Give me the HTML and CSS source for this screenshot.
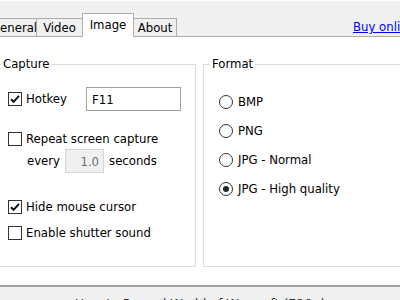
FILE: index.html
```html
<!DOCTYPE html>
<html lang="en">
<head>
    <meta charset="UTF-8">
    <title>Settings - Image</title>
    <link rel="stylesheet" href="styles.css">
</head>
<body>

    <div class="top-edge"></div>

    <!-- Tabs -->
    <div class="tab-strip">
        <div class="tab tab-general">General</div>
        <div class="tab tab-video">Video</div>
        <div class="tab tab-image active">Image</div>
        <div class="tab tab-about">About</div>
        <a class="buy-link" href="#">Buy online</a>
    </div>

    <!-- Image page -->
    <div class="panel">
        <fieldset class="group group-capture">
            <legend>Capture</legend>
            <div class="group-body">
                <div class="row row-hotkey">
                    <label class="check">
                        <span class="box checked">
                            <svg width="12" height="12" viewBox="0 0 12 12"><path d="M2 6.2 L4.6 8.8 L10 2.8" fill="none" stroke="#111" stroke-width="2"/></svg>
                        </span>
                        Hotkey
                    </label>
                    <input class="hotkey-input" type="text" value="F11">
                </div>
                <div class="row row-repeat">
                    <label class="check"><span class="box"></span>Repeat screen capture</label>
                </div>
                <div class="row row-every">
                    <span>every</span>
                    <input class="spin-input" type="text" value="1.0" disabled>
                    <span>seconds</span>
                </div>
                <div class="row row-cursor">
                    <label class="check">
                        <span class="box checked">
                            <svg width="12" height="12" viewBox="0 0 12 12"><path d="M2 6.2 L4.6 8.8 L10 2.8" fill="none" stroke="#111" stroke-width="2"/></svg>
                        </span>
                        Hide mouse cursor
                    </label>
                </div>
                <div class="row row-sound">
                    <label class="check"><span class="box"></span>Enable shutter sound</label>
                </div>
            </div>
        </fieldset>

        <fieldset class="group group-format">
            <legend>Format</legend>
            <div class="group-body">
                <label class="radio"><span class="dot"></span>BMP</label>
                <label class="radio"><span class="dot"></span>PNG</label>
                <label class="radio"><span class="dot"></span>JPG - Normal</label>
                <label class="radio"><span class="dot selected"></span>JPG - High quality</label>
            </div>
        </fieldset>
    </div>

    <!-- Video list below -->
    <div class="bottom-bar">
        <div class="video-title">How to Record World of Warcraft (720p)</div>
    </div>

</body>
</html>
```

FILE: styles.css
```css
body {
    margin: 0;
    padding: 0;
    width: 400px;
    height: 300px;
    overflow: hidden;
    background-color: #fff;
    font-family: "DejaVu Sans Condensed", "DejaVu Sans", sans-serif;
    font-size: 13px;
    line-height: 16px;
    color: #000;
}

.top-edge {
    width: 333px;
    height: 1px;
    background-color: #fff;
}

/* Tab strip */
.tab-strip {
    display: flex;
    align-items: flex-end;
    height: 35px;
    background-color: #f0f0f0;
    border-bottom: 1px solid #adadad;
    white-space: nowrap;
}

.tab {
    box-sizing: border-box;
    flex-shrink: 0;
    height: 18px;
    margin-left: -1px;
    border: 1px solid #adadad;
    border-bottom: none;
    background-color: #f0f0f0;
    text-align: center;
    line-height: 16px;
    padding-top: 1px;
}

.tab-general {
    width: 51px;
    margin-left: -14px;
    padding-left: 4px;
}

.tab-video {
    width: 47px;
}

.tab-image {
    width: 52px;
}

.tab-about {
    width: 44px;
}

.tab.active {
    height: 24px;
    margin-bottom: -1px;
    padding-top: 3px;
    background-color: #fff;
    z-index: 1;
}

.buy-link {
    flex-shrink: 0;
    margin-left: 176px;
    margin-bottom: 1px;
    color: #0000ff;
    text-decoration: underline;
}

/* Content page */
.panel {
    display: flex;
    padding-top: 19px;
    height: 211px;
}

.group {
    box-sizing: border-box;
    height: 211px;
    margin: 0;
    padding: 0;
    min-width: 0;
    border: 1px solid #dcdcdc;
}

.group legend {
    margin-left: 6px;
    padding: 0 2px;
    line-height: 16px;
}

.group-capture {
    width: 202px;
    flex-shrink: 0;
    margin-left: -6px;
}

.group-format {
    width: 210px;
    flex-shrink: 0;
    margin-left: 7px;
}

.group-capture .group-body {
    display: flex;
    flex-direction: column;
    padding-left: 13px;
    padding-right: 14px;
}

.row {
    display: flex;
    align-items: center;
}

.row-hotkey {
    height: 24px;
    margin-top: 15px;
}

.row-repeat {
    height: 16px;
    margin-top: 20px;
}

.row-every {
    height: 24px;
    margin-top: 2px;
    padding-left: 19px;
}

.row-cursor {
    height: 16px;
    margin-top: 26px;
}

.row-sound {
    height: 16px;
    margin-top: 10px;
}

.check {
    display: flex;
    align-items: center;
}

.box {
    box-sizing: border-box;
    width: 14px;
    height: 14px;
    margin-right: 4px;
    border: 1px solid #333;
    background-color: #fff;
    display: flex;
    align-items: center;
    justify-content: center;
}

.box svg {
    display: block;
}

input {
    font-family: inherit;
    font-size: 13px;
    box-sizing: border-box;
    margin: 0;
    outline: none;
}

.hotkey-input {
    width: 95px;
    height: 24px;
    margin-left: auto;
    padding: 0 5px;
    border: 1px solid #a0a0a0;
    color: #000;
}

.spin-input {
    width: 39px;
    height: 24px;
    margin: 0 5px;
    padding: 0 4px;
    border: 1px solid #d6d6d6;
    background-color: #f0f0f0;
    color: #6d6d6d;
    text-align: right;
}

/* Radios */
.group-format .group-body {
    display: flex;
    flex-direction: column;
    gap: 13px;
    padding-top: 22px;
    padding-left: 15px;
}

.radio {
    display: flex;
    align-items: center;
    height: 16px;
}

.dot {
    box-sizing: border-box;
    width: 14px;
    height: 14px;
    margin-right: 5px;
    border: 1px solid #333;
    border-radius: 50%;
    background-color: #fff;
    display: flex;
    align-items: center;
    justify-content: center;
}

.dot.selected::after {
    content: "";
    width: 6px;
    height: 6px;
    border-radius: 50%;
    background-color: #222;
}

/* Bottom bar */
.bottom-bar {
    border-top: 2px solid #a0a0a0;
    margin-top: 18px;
    background-color: #f0f0f0;
    height: 40px;
    padding-top: 9px;
    box-sizing: border-box;
}

.video-title {
    text-align: center;
    color: #333;
    font-size: 14px;
}
```
